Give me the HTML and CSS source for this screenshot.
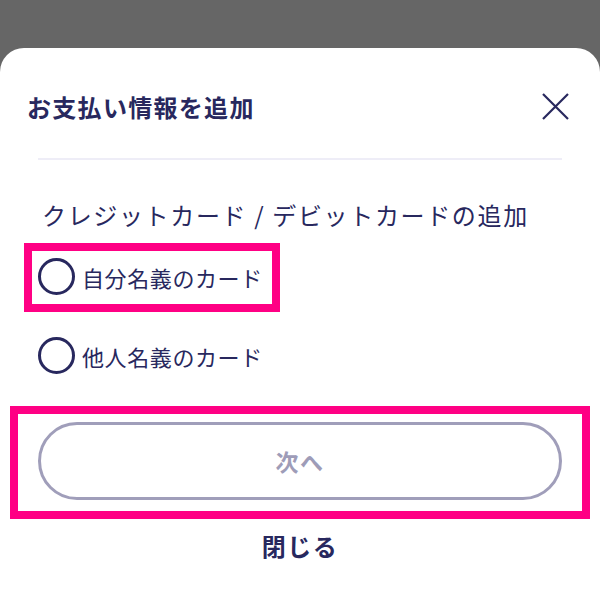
FILE: index.html
```html
<!DOCTYPE html>
<html lang="ja">
<head>
<meta charset="utf-8">
<link rel="stylesheet" href="styles.css">
</head>
<body>
<div class="sheet">
  <div class="header">
    <h1 class="title">お支払い情報を追加</h1>
    <button class="close" aria-label="閉じる">
      <svg width="27" height="27" viewBox="0 0 27 27"><path d="M1 1 L26 26 M26 1 L1 26" stroke="#28285e" stroke-width="2.2" fill="none"/></svg>
    </button>
  </div>
  <div class="divider"></div>
  <div class="content">
    <h2 class="heading">クレジットカード / デビットカードの追加</h2>
    <div class="options">
      <label class="option highlighted">
        <span class="radio"></span>
        <span class="option-text">自分名義のカード</span>
        <span class="mark mark-option"></span>
      </label>
      <label class="option">
        <span class="radio"></span>
        <span class="option-text">他人名義のカード</span>
      </label>
    </div>
    <div class="next-wrap">
      <button class="next">次へ</button>
      <span class="mark mark-next"></span>
    </div>
    <div class="close-link">閉じる</div>
  </div>
</div>
</body>
</html>
```

FILE: styles.css
```css
* { box-sizing: border-box; }
html, body {
  margin: 0;
  padding: 0;
  background: #666666;
  height: 604px;
  overflow: hidden;
}
body {
  font-family: "Noto Sans CJK JP", "Noto Sans", sans-serif;
  color: #28285e;
}
.sheet {
  margin-top: 48px;
  height: 556px;
  background: #ffffff;
  border-radius: 24px 24px 0 0;
}
.header {
  display: flex;
  justify-content: space-between;
  align-items: center;
  padding: 34px 31px 0 27px;
  height: 83px;
}
.title {
  margin: 0;
  font-size: 24px;
  font-weight: 700;
  letter-spacing: 1.3px;
  line-height: 34px;
}
.close {
  width: 27px;
  height: 27px;
  padding: 0;
  border: 0;
  background: none;
  display: flex;
}
.divider {
  margin: 27px 38px 0;
  height: 2px;
  background: #eeedf7;
}
.content {
  padding: 0 38px;
}
.heading {
  margin: 38px 0 0 4px;
  font-size: 24px;
  font-weight: 400;
  line-height: 34px;
  letter-spacing: 1.65px;
}
.options {
  margin-top: 26px;
  display: flex;
  flex-direction: column;
  gap: 42px;
}
.option {
  position: relative;
  display: flex;
  align-items: center;
  gap: 7px;
  height: 37px;
}
.radio {
  width: 37px;
  height: 37px;
  border: 3px solid #28285e;
  border-radius: 50%;
  flex: none;
}
.option-text {
  font-size: 22px;
  letter-spacing: 0.6px;
  line-height: 32px;
}
.mark {
  position: absolute;
  border: 8px solid #ff0084;
  pointer-events: none;
}
.mark-option {
  left: -14px;
  top: -15px;
  width: 256px;
  height: 69px;
}
.next-wrap {
  position: relative;
  margin-top: 48px;
}
.next {
  display: block;
  width: 100%;
  height: 78px;
  border: 3px solid #a09eba;
  border-radius: 39px;
  background: #ffffff;
  color: #9e9cb8;
  font-family: inherit;
  font-size: 23px;
  font-weight: 700;
  letter-spacing: 1.5px;
}
.mark-next {
  left: -28px;
  right: -28px;
  top: -16px;
  bottom: -19px;
}
.close-link {
  margin-top: 30px;
  text-align: center;
  font-size: 24px;
  font-weight: 700;
  letter-spacing: 1.5px;
  line-height: 32px;
}
```
